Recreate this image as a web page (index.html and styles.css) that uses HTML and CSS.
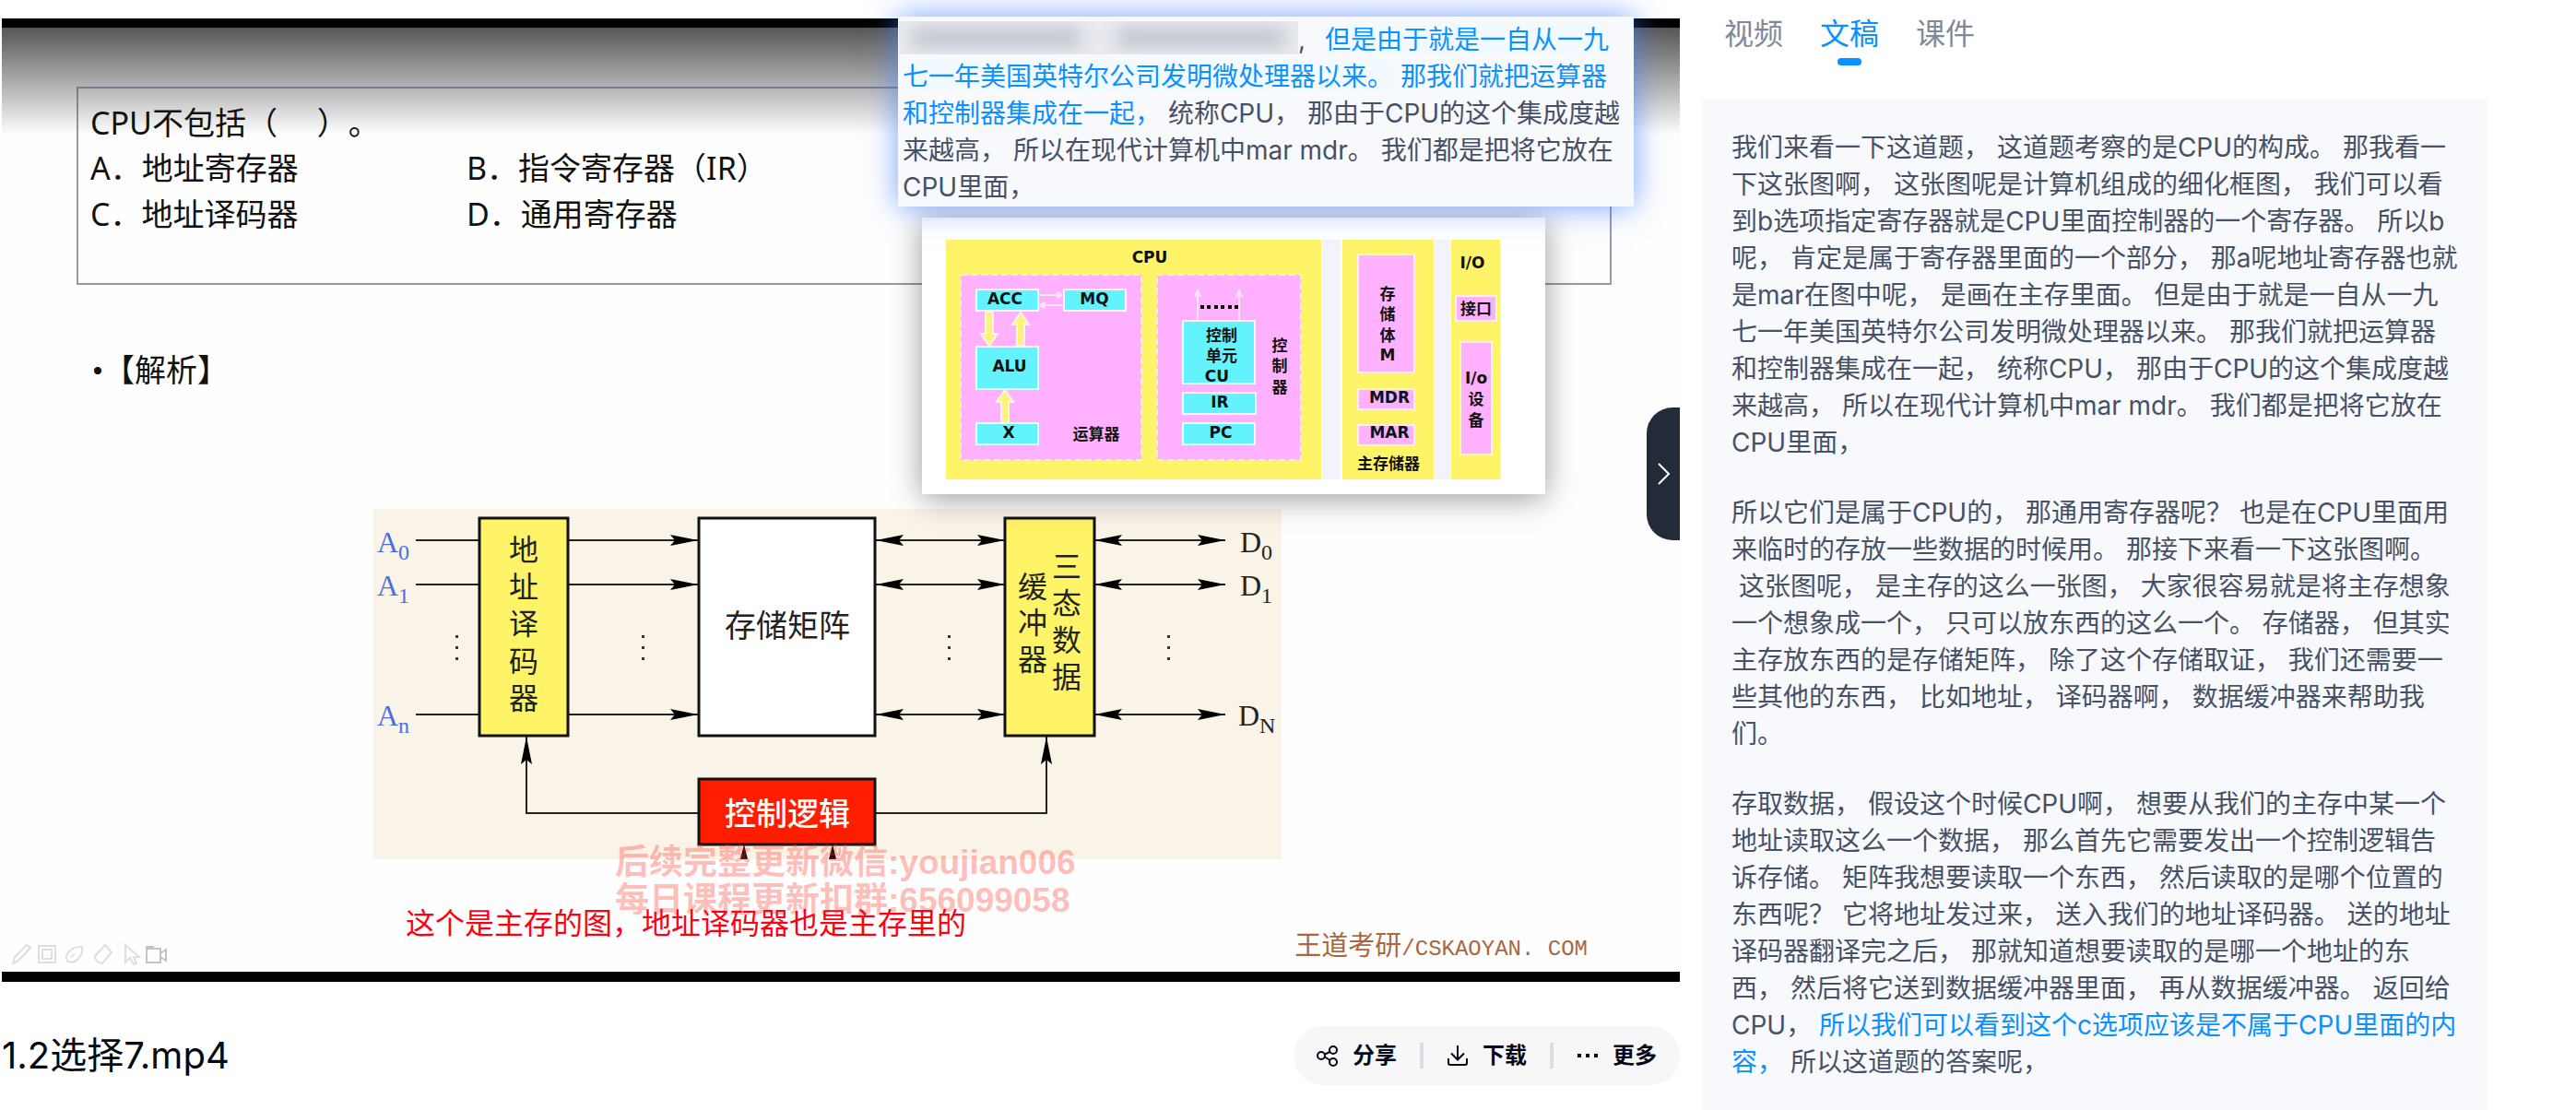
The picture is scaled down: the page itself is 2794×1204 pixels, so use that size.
FILE: index.html
```html
<!DOCTYPE html>
<html lang="zh-CN">
<head>
<meta charset="utf-8">
<meta name="viewport" content="width=device-width, initial-scale=1">
<title>1.2选择7.mp4</title>
<link rel="stylesheet" href="styles.css">
</head>
<body>
<div class="page">
  <main class="player">
    <section class="frame">
      <div class="question">
        <p class="question-line">CPU不包括（　&nbsp;）。</p>
        <div class="options">
          <span>A．地址寄存器</span><span>B．指令寄存器（IR）</span>
          <span>C．地址译码器</span><span>D．通用寄存器</span>
        </div>
      </div>
      <p class="analysis"><span class="bullet">•</span>【解析】</p>

      <div class="circuit">
        <svg viewBox="405 551 985 380" role="img" aria-label="主存结构图">
          <defs>
            <marker id="head" markerUnits="userSpaceOnUse" markerWidth="30" markerHeight="14" refX="30" refY="7" orient="auto-start-reverse"><path class="head" d="M0 1 30 7 0 13 5 7z"/></marker>
          </defs>
          <rect x="405" y="551" width="985" height="380" fill="#f9f3e8"/>
          <g class="wire">
            <path d="M451 585H519M451 633H519M451 774H519"/>
            <path marker-end="url(#head)" d="M617 585H757"/>
            <path marker-end="url(#head)" d="M617 633H757"/>
            <path marker-end="url(#head)" d="M617 774H757"/>
            <path marker-start="url(#head)" marker-end="url(#head)" d="M950 585H1090"/>
            <path marker-start="url(#head)" marker-end="url(#head)" d="M950 633H1090"/>
            <path marker-start="url(#head)" marker-end="url(#head)" d="M950 774H1090"/>
            <path marker-start="url(#head)" marker-end="url(#head)" d="M1187 585H1329"/>
            <path marker-start="url(#head)" marker-end="url(#head)" d="M1187 633H1329"/>
            <path marker-start="url(#head)" marker-end="url(#head)" d="M1187 774H1329"/>
            <path marker-end="url(#head)" d="M758 881H571V798"/>
            <path marker-end="url(#head)" d="M950 881H1135V798"/>
          </g>
          <g stroke="#111" stroke-width="3">
            <rect x="520" y="561" width="96" height="236" fill="#fff468"/>
            <rect x="758" y="561" width="191" height="236" fill="#fff"/>
            <rect x="1090" y="561" width="97" height="236" fill="#fff468"/>
            <rect x="758" y="844" width="191" height="71" fill="#ff1d00"/>
          </g>
          <path d="M807 915 811 931H803zM903 915 907 931H899z"/>
          <path fill="#333" d="M494 688h3v3h-3zm0 12h3v3h-3zm0 12h3v3h-3zM696 688h3v3h-3zm0 12h3v3h-3zm0 12h3v3h-3zM1028 688h3v3h-3zm0 12h3v3h-3zm0 12h3v3h-3zM1266 688h3v3h-3zm0 12h3v3h-3zm0 12h3v3h-3z"/>
          <g class="pin pin-in">
            <text x="409" y="598">A<tspan class="sub" dy="8">0</tspan></text>
            <text x="409" y="645">A<tspan class="sub" dy="8">1</tspan></text>
            <text x="409" y="786">A<tspan class="sub" dy="8">n</tspan></text>
          </g>
          <g class="pin">
            <text x="1345" y="598">D<tspan class="sub" dy="8">0</tspan></text>
            <text x="1345" y="645">D<tspan class="sub" dy="8">1</tspan></text>
            <text x="1343" y="786">D<tspan class="sub" dy="8">N</tspan></text>
          </g>
          <g class="block" text-anchor="middle">
            <text x="568" y="607">地</text><text x="568" y="647">址</text><text x="568" y="687">译</text><text x="568" y="728">码</text><text x="568" y="768">器</text>
            <text x="1157" y="625">三</text><text x="1157" y="665">态</text><text x="1157" y="705">数</text><text x="1157" y="745">据</text>
            <text x="1120" y="647">缓</text><text x="1120" y="686">冲</text><text x="1120" y="726">器</text>
            <text class="wide" x="854" y="690">存储矩阵</text>
            <text class="wide control" x="854" y="894">控制逻辑</text>
          </g>
        </svg>
        <p class="watermark">后续完整更新微信:youjian006<br>每日课程更新扣群:656099058</p>
      </div>

      <p class="caption">这个是主存的图，地址译码器也是主存里的</p>
      <div class="slide-foot">
        <svg class="pens" viewBox="0 0 172 24" aria-hidden="true">
          <path d="M4 22 6 15 19 2 23 5 10 19zM32 3h18v18H32zM36 7h10v10H36zM64 20c-6-5 2-17 15-16 2 9-7 19-15 16zM67 15l4-3M93 14 104 2l7 8-10 12c-5 0-8-4-8-8zM126 2v19l5-5 4 7 3-1-3-7h6z"/>
          <path class="camera" d="M149 6h15v15h-15zM148 4h9M164 11l6-4v12l-6-4"/>
        </svg>
        <span class="brand">王道考研<span class="brand-site">/CSKAOYAN. COM</span></span>
      </div>

      <div class="cpu-card">
        <svg viewBox="1000 236 676 300" role="img" aria-label="计算机组成框图">
          <path fill="#f3f4fb" d="M1434 260h20v260h-20zM1556 260h17v260h-17z"/>
          <g fill="#fff468"><rect x="1026" y="260" width="407" height="260"/><rect x="1456" y="260" width="99" height="260"/><rect x="1574" y="260" width="53" height="260"/></g>
          <g fill="#ffb0ff" stroke="#fdeedc" stroke-width="2" stroke-dasharray="7 4"><rect x="1042" y="298" width="196" height="201"/><rect x="1255" y="298" width="156" height="201"/></g>
          <g fill="#ffb0ff" stroke="#fff3d8" stroke-width="2"><rect x="1473" y="276" width="61" height="128"/><rect x="1473" y="422" width="61" height="22"/><rect x="1473" y="461" width="61" height="22"/><rect x="1579" y="321" width="44" height="27"/><rect x="1584" y="371" width="34" height="122"/></g>
          <g fill="#62f3ff" stroke="#eefaff" stroke-width="2"><rect x="1059" y="314" width="67" height="23"/><rect x="1154" y="314" width="67" height="23"/><rect x="1059" y="376" width="67" height="46"/><rect x="1059" y="459" width="67" height="23"/><rect x="1283" y="348" width="78" height="68"/><rect x="1283" y="426" width="79" height="23"/><rect x="1283" y="459" width="78" height="23"/></g>
          <g fill="#fff27a" stroke="#fff7e6" stroke-width="2">
            <path d="M1069 338h8v24h5l-9 13-9-13h5zM1103 375h8v-23h5l-9-13-9 13h5zM1086 459h8v-23h5l-9-13-9 13h5z"/>
          </g>
          <path fill="none" stroke="#ffe6f6" stroke-width="2" d="M1127 320h25m-6-3 6 3-6 3M1153 331h-25m6-3-6 3 6 3M1299 347v-32m-3 7 3-7 3 7M1344 347v-32m-3 7 3-7 3 7"/>
          <path d="M1302 331h4v4h-4zm7 0h4v4h-4zm8 0h4v4h-4zm7 0h4v4h-4zm8 0h4v4h-4zm7 0h4v4h-4z"/>
          <g class="cpu-text" text-anchor="middle">
            <text x="1247" y="285">CPU</text><text x="1090" y="330">ACC</text><text x="1187" y="330">MQ</text><text x="1095" y="403">ALU</text><text x="1094" y="475">X</text>
            <text x="1189" y="477">运算器</text><text x="1325" y="370">控制</text><text x="1325" y="392">单元</text><text x="1320" y="414">CU</text><text x="1323" y="442">IR</text><text x="1324" y="475">PC</text>
            <text x="1388" y="381">控</text><text x="1388" y="403">制</text><text x="1388" y="426">器</text>
            <text x="1505" y="325">存</text><text x="1505" y="347">储</text><text x="1505" y="370">体</text><text x="1505" y="391">M</text><text x="1507" y="437">MDR</text><text x="1507" y="475">MAR</text><text x="1506" y="509">主存储器</text>
            <text x="1597" y="291">I/O</text><text x="1601" y="341">接口</text><text x="1601" y="416">I/o</text><text x="1601" y="439">设</text><text x="1601" y="462">备</text>
          </g>
        </svg>
      </div>

      <div class="excerpt"><span class="blurred" aria-hidden="true"><i></i><i></i></span><span class="blur-end">,</span> <span class="hit tint">但是由于就是一自从一九七一年美国英特尔公司发明微处理器以来。</span> <span class="hit">那我们就把运算器和控制器集成在一起，</span> 统称CPU， 那由于CPU的这个集成度越来越高， 所以在现代计算机中mar mdr。 我们都是把将它放在CPU里面，</div>

      <button class="collapse" type="button" aria-label="收起">
        <svg viewBox="0 0 16 26" aria-hidden="true"><path d="M2 2 13 13 2 24"/></svg>
      </button>
    </section>

    <div class="file-bar">
      <h1 class="file-name">1.2选择7.mp4</h1>
      <div class="actions">
        <button type="button">
          <svg viewBox="0 0 24 24" aria-hidden="true"><circle cx="5" cy="12" r="4"/><circle cx="18" cy="6" r="4"/><circle cx="18" cy="19" r="4"/><path d="M9 10.500 14.500 8M9 13.500 14.500 17"/></svg>分享
        </button>
        <button type="button">
          <svg viewBox="0 0 24 24" aria-hidden="true"><path d="M12 1V16M5 9.500 12 16.500 19 9.500M2 15V20Q2 22 4 22H20Q22 22 22 20V15"/></svg>下载
        </button>
        <button type="button">
          <svg viewBox="0 0 24 24" aria-hidden="true"><path class="solid" d="M1 10h4v4H1zM10 10h4v4h-4zM19 10h4v4h-4z"/></svg>更多
        </button>
      </div>
    </div>
  </main>

  <aside class="side">
    <nav class="tabs">
      <button type="button" class="tab">视频</button>
      <button type="button" class="tab active">文稿</button>
      <button type="button" class="tab">课件</button>
    </nav>
    <article class="transcript">
      <p>我们来看一下这道题， 这道题考察的是CPU的构成。 那我看一下这张图啊， 这张图呢是计算机组成的细化框图， 我们可以看到b选项指定寄存器就是CPU里面控制器的一个寄存器。 所以b呢， 肯定是属于寄存器里面的一个部分， 那a呢地址寄存器也就是mar在图中呢， 是画在主存里面。 但是由于就是一自从一九七一年美国英特尔公司发明微处理器以来。 那我们就把运算器和控制器集成在一起， 统称CPU， 那由于CPU的这个集成度越来越高， 所以在现代计算机中mar mdr。 我们都是把将它放在CPU里面，</p>
      <p>所以它们是属于CPU的， 那通用寄存器呢？ 也是在CPU里面用来临时的存放一些数据的时候用。 那接下来看一下这张图啊。 &nbsp;这张图呢， 是主存的这么一张图， 大家很容易就是将主存想象一个想象成一个， 只可以放东西的这么一个。 存储器， 但其实主存放东西的是存储矩阵， 除了这个存储取证， 我们还需要一些其他的东西， 比如地址， 译码器啊， 数据缓冲器来帮助我们。</p>
      <p>存取数据， 假设这个时候CPU啊， 想要从我们的主存中某一个地址读取这么一个数据， 那么首先它需要发出一个控制逻辑告诉存储。 矩阵我想要读取一个东西， 然后读取的是哪个位置的东西呢？ 它将地址发过来， 送入我们的地址译码器。 送的地址译码器翻译完之后， 那就知道想要读取的是哪一个地址的东西， 然后将它送到数据缓冲器里面， 再从数据缓冲器。 返回给CPU， <span class="hit">所以我们可以看到这个c选项应该是不属于CPU里面的内容，</span> 所以这道题的答案呢，</p>
    </article>
  </aside>
</div>
</body>
</html>
```
FILE: styles.css
```css
* { box-sizing: border-box; }

body {
  margin: 0;
  background: #fff;
  color: #475166;
  font-family: Inter, "Noto Sans CJK SC", sans-serif;
  font-size: 28px;
  line-height: 40px;
}

p, h1 { margin: 0; }

button {
  border: 0;
  padding: 0;
  background: none;
  color: inherit;
  font: inherit;
  cursor: pointer;
}

svg { display: block; }

.page {
  display: grid;
  grid-template-columns: 1820fr 852fr;
  gap: 24px;
  padding: 0 96px 0 2px;
}

/* Video frame */
.frame {
  position: relative;
  display: flow-root;
  margin-top: 20px;
  border-top: 10px solid #000;
  border-bottom: 11px solid #000;
  background: linear-gradient(rgba(0, 0, 0, .66), transparent 116px) #fefefe;
  color: #111;
}

.question {
  min-height: 215px;
  margin: 64px 74px 0 81px;
  padding: 13px;
  border: 2px solid rgba(70, 90, 115, .6);
  font: 34px/50px "Noto Sans", "Noto Sans CJK SC", sans-serif;
  text-spacing-trim: space-all;
}

.question-line { line-height: 48px; }

.options {
  display: grid;
  grid-template-columns: 408px 1fr;
}

.analysis {
  display: flex;
  margin: 70px 0 0 98px;
  font: 34px/48px "Liberation Serif", "Noto Sans CJK SC", serif;
}

.bullet { width: 12px; }

.circuit {
  position: relative;
  width: 985px;
  margin: 125px 0 0 403px;
}

.wire path { fill: none; stroke: #222; stroke-width: 2; }
.head { fill: #000; }

.pin { font: 32px "Liberation Serif", serif; fill: #222; }
.pin-in { fill: #4a6fe0; }
.sub { font-size: 24px; }
.block { font: 32px "Noto Sans CJK SC", sans-serif; fill: #222; }
.block .wide { font-size: 34px; }
.block .control { fill: #fff; font-weight: 500; }

.watermark {
  position: absolute;
  top: 363px;
  left: 262px;
  color: rgba(255, 70, 55, .35);
  font: bold 37px/41px "Liberation Sans", "Noto Sans CJK SC", sans-serif;
  white-space: nowrap;
}

.caption {
  position: relative;
  margin: 55px 0 0 438px;
  color: #ff0012;
  font: 32px/24px "Noto Sans CJK SC", sans-serif;
}

.slide-foot {
  display: flex;
  justify-content: space-between;
  align-items: flex-start;
  height: 43px;
  padding: 4px 100px 0 8px;
}

.pens {
  width: 172px;
  height: 24px;
  margin-top: 8px;
  fill: none;
  stroke: #dedede;
  stroke-width: 2;
}

.pens .camera { stroke: #c4c4c4; }

.brand {
  color: #a9663f;
  font: 29px/28px "Liberation Mono", "Noto Sans CJK SC", monospace;
}

.brand-site { font-size: 24px; }

.cpu-card {
  position: absolute;
  top: 206px;
  left: 998px;
  width: 676px;
  background: #fff;
  box-shadow: 0 4px 32px rgba(0, 0, 0, .4);
}

.cpu-text { font: bold 17px "DejaVu Sans", "Noto Sans CJK SC", sans-serif; fill: #111; }

.excerpt {
  position: absolute;
  top: -12px;
  left: 972px;
  width: 798px;
  height: 206px;
  padding: 5px;
  background: #f8f9fd;
  box-shadow: 0 0 32px rgba(70, 130, 255, .75);
  color: #475166;
}

/* Redacted words */
.blurred {
  display: inline-flex;
  gap: 40px;
  width: 433px;
  height: 36px;
  margin-left: -4px;
  padding: 10px 14px;
  overflow: hidden;
  vertical-align: top;
  background: #e9ebf0;
}

.blurred i {
  flex: 1;
  background: #b2b8c2;
  filter: blur(10px);
}

.blur-end { padding-right: 13px; }

.hit { color: #0991ff; }
.tint { background: #f2f9ff; }

.collapse {
  position: absolute;
  top: 412px;
  right: 0;
  display: grid;
  place-items: center;
  width: 36px;
  height: 144px;
  padding-left: 2px;
  border-radius: 28px 0 0 28px;
  background: #232a38;
}

.collapse svg {
  width: 16px;
  height: 26px;
  fill: none;
  stroke: #fff;
  stroke-width: 2;
}

/* File name and actions */
.file-bar {
  display: flex;
  justify-content: space-between;
  align-items: center;
  margin-top: 48px;
}

.file-name {
  color: #05080f;
  font-size: 40px;
  font-weight: 400;
  line-height: 56px;
}

.actions {
  display: flex;
  align-items: center;
  height: 64px;
  border-radius: 32px;
  background: #f7f7f8;
}

.actions button {
  display: flex;
  align-items: center;
  gap: 15px;
  height: 28px;
  padding: 0 25px;
  color: #03081a;
  font-size: 24px;
  font-weight: 600;
}

.actions button + button { border-left: 4px solid #dadde6; }

.actions svg {
  width: 24px;
  height: 24px;
  fill: none;
  stroke: currentColor;
  stroke-width: 2;
}

.actions .solid { fill: currentColor; stroke: none; }

/* Transcript */
.tabs {
  display: flex;
  gap: 40px;
  padding: 15px 24px 37px;
}

.tab {
  display: flex;
  flex-direction: column;
  align-items: center;
  gap: 4px;
  color: #818999;
  font-size: 32px;
  line-height: 44px;
}

.tab::after {
  content: "";
  width: 26px;
  height: 8px;
  border-radius: 4px;
}

.tab.active { color: #0991ff; }
.tab.active::after { background: #0991ff; }

.transcript {
  display: flex;
  flex-direction: column;
  gap: 36px;
  padding: 32px 32px 33px;
  background: #f8f9fd;
}
```
